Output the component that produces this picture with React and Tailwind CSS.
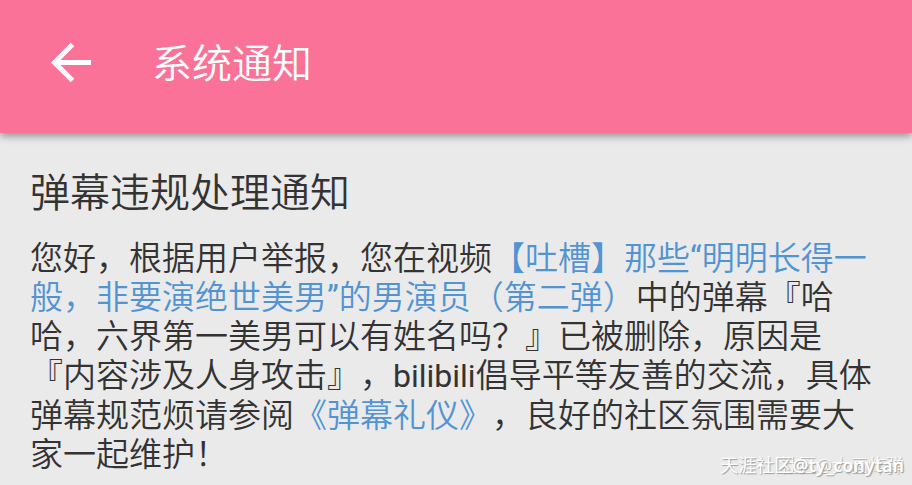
import React from "react";

export default function App() {
  return (
    <div className="min-h-screen bg-[#eaeaea] text-[#333333] [font-family:Roboto,'Noto_Sans_CJK_SC',sans-serif] [text-spacing-trim:space-all]" lang="zh-CN">
      <header className="flex items-center gap-[52px] bg-[#fb7299] px-10 pt-8 pb-10 shadow-[0_3px_8px_rgba(0,0,0,0.4)]">
        <button type="button" aria-label="返回" className="text-white">
          <svg viewBox="0 0 60 60" className="size-15" fill="none" stroke="currentColor" strokeWidth="5">
            <path d="M51 29.500H15M32.500 11.500L14.500 29.500L32.500 47.500" />
          </svg>
        </button>
        <h1 className="pt-1 text-[40px] leading-[57px] font-[350] text-white">系统通知</h1>
      </header>
      <main className="px-[30px] pt-8">
        <h2 className="text-[40px] leading-[58px] font-[350]">弹幕违规处理通知</h2>
        <p className="mt-4 text-[33px] leading-[39px] font-[350]">
          您好，根据用户举报，您在视频<a href="#video" className="text-[#5294d2]">【吐槽】那些<span className="font-normal">“</span>明明长得一般，非要演绝世美男<span className="font-normal">”</span>的男演员（第二弹）</a>中的弹幕『哈哈，六界第一美男可以有姓名吗？』已被删除，原因是『内容涉及人身攻击』，<span className="text-[32px] font-normal">bilibili</span>倡导平等友善的交流，具体弹幕规范烦请参阅<a href="#etiquette" className="text-[#5294d2]">《弹幕礼仪》</a>，良好的社区氛围需要大家一起维护！
        </p>
      </main>
      <div className="absolute right-2 bottom-2 text-right text-lg leading-6 whitespace-nowrap text-white [font-family:'Noto_Sans','Noto_Sans_CJK_SC',sans-serif] [text-shadow:1px_1px_1px_#999999]">
        <span className="absolute right-0 font-light">社区@大画炸弹</span>
        <span className="relative">天涯社区<span className="font-semibold">@ty_conytan</span></span>
      </div>
    </div>
  );
}
